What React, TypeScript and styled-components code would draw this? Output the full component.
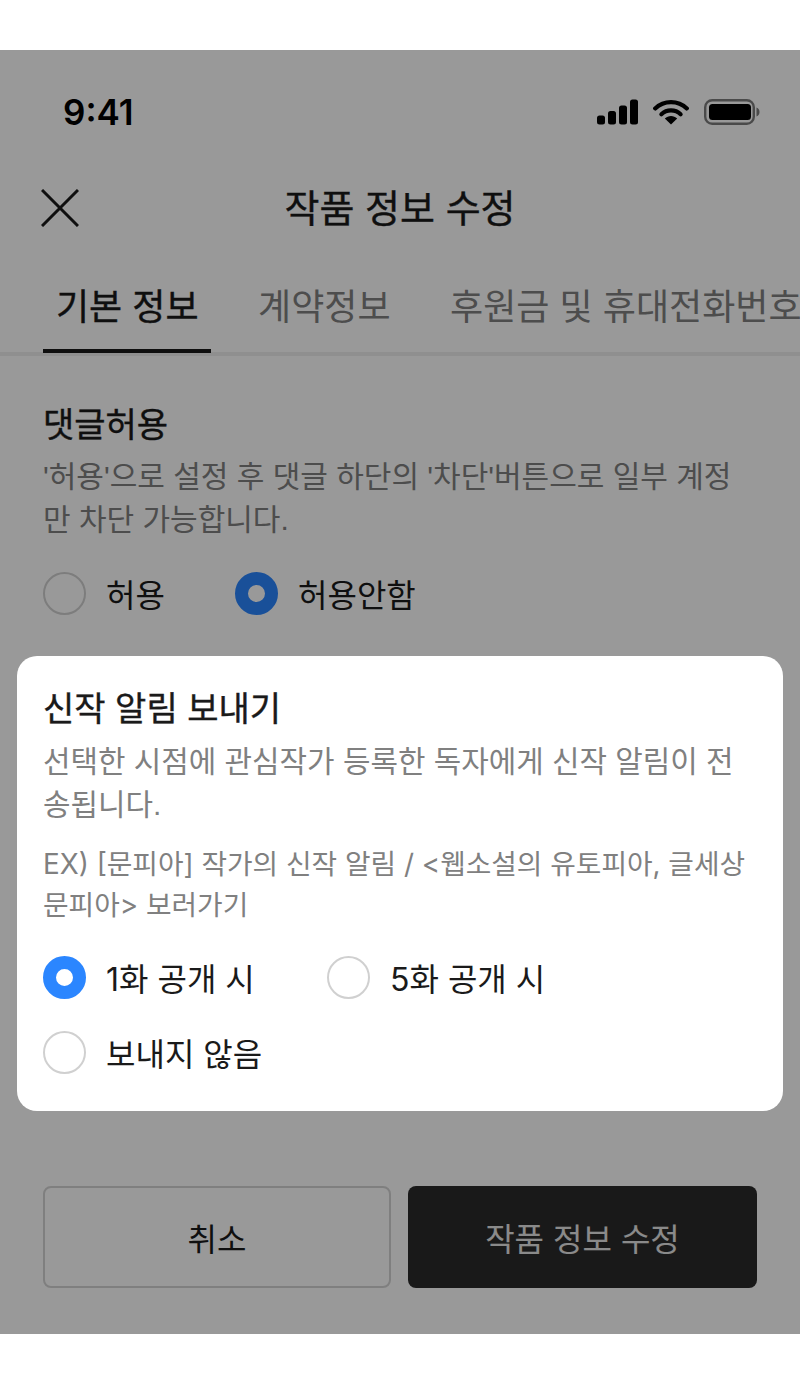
import React from 'react';
import styled, { createGlobalStyle } from 'styled-components';

const GlobalStyle = createGlobalStyle`
  * {
    box-sizing: border-box;
  }

  body {
    margin: 0;
    background: #fff;
    font-family: Inter, 'Noto Sans CJK KR', sans-serif;
    color: #1a1a1a;
  }
`;

function SignalIcon() {
  return (
    <svg width='41' height='26' viewBox='0 0 41 26' fill='#000'>
      <rect x='0' y='16.5' width='8' height='9' rx='2.5' />
      <rect x='11' y='12' width='8' height='13.5' rx='2.5' />
      <rect x='22' y='6.5' width='8' height='19' rx='2.5' />
      <rect x='33' y='0.5' width='8' height='25' rx='2.5' />
    </svg>
  );
}

function WifiIcon() {
  return (
    <svg width='36' height='26' viewBox='0 0 36 26' fill='none'>
      <path d='M2.2 9.4C11 1 25 1 33.8 9.4' stroke='#000' strokeWidth='4.2' strokeLinecap='round' />
      <path d='M8.4 15.2C13.8 10.2 22.2 10.2 27.6 15.2' stroke='#000' strokeWidth='4.2' strokeLinecap='round' />
      <path d='M11.8 19.5C15.3 16 20.7 16 24.2 19.5L18 25.6Z' fill='#000' />
    </svg>
  );
}

function BatteryIcon() {
  return (
    <svg width='56' height='26' viewBox='0 0 56 26' fill='none'>
      <rect x='1.2' y='1.2' width='48.6' height='23.6' rx='7' stroke='#7c7c7c' strokeWidth='2.4' />
      <rect x='5' y='5' width='42' height='16' rx='3.5' fill='#000' />
      <path d='M52.5 8.5C54.5 9 55.5 11 55.5 13C55.5 15 54.5 17 52.5 17.5Z' fill='#7c7c7c' />
    </svg>
  );
}

function CloseIcon() {
  return (
    <svg width='38' height='38' viewBox='0 0 38 38' fill='none'>
      <path d='M1 1L37 37M37 1L1 37' stroke='#1a1a1a' strokeWidth='3' />
    </svg>
  );
}

function App() {
  return (
    <>
      <GlobalStyle />
      <Screen>
        <StatusBar>
          <Time>9:41</Time>
          <StatusIcons>
            <SignalIcon />
            <WifiIcon />
            <BatteryIcon />
          </StatusIcons>
        </StatusBar>

        <Header>
          <CloseButton type='button'>
            <CloseIcon />
          </CloseButton>
          <Title>작품 정보 수정</Title>
        </Header>

        <Tabs>
          <Tab $active>기본 정보</Tab>
          <Tab>계약정보</Tab>
          <Tab>후원금 및 휴대전화번호</Tab>
        </Tabs>

        <Section>
          <SectionTitle>댓글허용</SectionTitle>
          <Description>'허용'으로 설정 후 댓글 하단의 '차단'버튼으로 일부 계정 만 차단 가능합니다.</Description>
          <RadioGroup>
            <RadioItem $width={192}>
              <Radio />
              허용
            </RadioItem>
            <RadioItem>
              <Radio $checked />
              허용안함
            </RadioItem>
          </RadioGroup>
        </Section>

        <Footer>
          <CancelButton type='button'>취소</CancelButton>
          <SubmitButton type='button'>작품 정보 수정</SubmitButton>
        </Footer>

        <Dim />

        <Modal>
          <SectionTitle>신작 알림 보내기</SectionTitle>
          <ModalDescription>선택한 시점에 관심작가 등록한 독자에게 신작 알림이 전송됩니다.</ModalDescription>
          <Example>EX) [문피아] 작가의 신작 알림 / &lt;웹소설의 유토피아, 글세상 문피아&gt; 보러가기</Example>
          <ModalRadios>
            <RadioItem $width={284}>
              <Radio $checked />
              1화 공개 시
            </RadioItem>
            <RadioItem>
              <Radio />
              5화 공개 시
            </RadioItem>
            <RadioItem>
              <Radio />
              보내지 않음
            </RadioItem>
          </ModalRadios>
        </Modal>
      </Screen>
    </>
  );
}

export default App;

const Screen = styled.div`
  position: relative;
  display: flex;
  flex-direction: column;
  height: 1284px;
  margin: 50px 0;
  overflow: hidden;
  background: #fff;
`;

const StatusBar = styled.div`
  display: flex;
  align-items: center;
  justify-content: space-between;
  height: 62px;
  margin-top: 31px;
  padding: 0 40px 0 63px;
`;

const Time = styled.span`
  font-size: 35px;
  font-weight: 600;
  color: #000;
`;

const StatusIcons = styled.div`
  display: flex;
  gap: 15px;
  align-items: center;
`;

const Header = styled.header`
  position: relative;
  display: flex;
  align-items: center;
  justify-content: center;
  height: 60px;
  margin-top: 35px;
`;

const CloseButton = styled.button`
  position: absolute;
  top: 11px;
  left: 41px;
  display: flex;
  padding: 0;
  border: 0;
  background: none;
`;

const Title = styled.h1`
  margin: 0;
  font-size: 38px;
  font-weight: 400;
  line-height: 62px;
  -webkit-text-stroke: 0.4px currentcolor;
`;

const Tabs = styled.nav`
  display: flex;
  gap: 34px;
  height: 90px;
  margin-top: 28px;
  padding-left: 43px;
  white-space: nowrap;
  box-shadow: inset 0 -4px 0 #efefef;
`;

const Tab = styled.div<{ $active?: boolean }>`
  flex-shrink: 0;
  height: 87px;
  padding: 0 12.5px 0 13px;
  font-size: 36px;
  font-weight: 400;
  line-height: 82px;
  color: ${({ $active }) => ($active ? '#1a1a1a' : '#808080')};
  border-bottom: 4px solid ${({ $active }) => ($active ? '#1a1a1a' : 'transparent')};
  ${({ $active }) => $active && '-webkit-text-stroke: 0.4px currentcolor;'}
`;

const Section = styled.section`
  padding: 47px 43px 0;
`;

const SectionTitle = styled.h2`
  margin: 0;
  font-size: 34px;
  font-weight: 400;
  line-height: 44px;
  -webkit-text-stroke: 0.4px currentcolor;
`;

const Description = styled.p`
  margin: 9px 0 0;
  font-family: 'Liberation Sans', 'Noto Sans CJK KR', sans-serif;
  font-size: 30px;
  line-height: 42.5px;
  color: #808080;
`;

const ModalDescription = styled(Description)`
  margin-top: 10px;
  font-size: 29.9px;
`;

const Example = styled.p`
  margin: 18px 0 0;
  font-size: 27.8px;
  line-height: 41px;
  color: #808080;
`;

const RadioGroup = styled.div`
  display: flex;
  margin-top: 30px;
`;

const RadioItem = styled.label<{ $width?: number }>`
  display: flex;
  gap: 20px;
  align-items: center;
  width: ${({ $width }) => ($width ? `${$width}px` : 'auto')};
  height: 44px;
  font-size: 32px;
`;

const Radio = styled.span<{ $checked?: boolean }>`
  flex-shrink: 0;
  width: 43px;
  height: 43px;
  border-radius: 50%;
  background: #fff;
  border: ${({ $checked }) => ($checked ? '13px solid #2b86ff' : '2.5px solid #d0d0d0')};
`;

const Footer = styled.footer`
  display: grid;
  grid-template-columns: 348px 349px;
  gap: 17px;
  margin-top: auto;
  padding: 0 43px 46px;
`;

const CancelButton = styled.button`
  height: 102px;
  border: 2.5px solid #d4d4d4;
  border-radius: 8px;
  background: #fff;
  font-family: inherit;
  font-size: 32px;
  color: #1a1a1a;
`;

const SubmitButton = styled.button`
  height: 102px;
  border: 0;
  border-radius: 8px;
  background: #2a2a2a;
  font-family: inherit;
  font-size: 32px;
  color: #e6e6e6;
`;

const Dim = styled.div`
  position: absolute;
  inset: 0;
  background: rgb(0 0 0 / 40%);
`;

const Modal = styled.div`
  position: absolute;
  top: 606px;
  right: 17px;
  left: 17px;
  height: 455px;
  padding: 31px 26px 0;
  border-radius: 20px;
  background: #fff;
`;

const ModalRadios = styled.div`
  display: flex;
  flex-wrap: wrap;
  row-gap: 31px;
  margin-top: 29px;

  label:nth-child(3) {
    width: 100%;
  }
`;
